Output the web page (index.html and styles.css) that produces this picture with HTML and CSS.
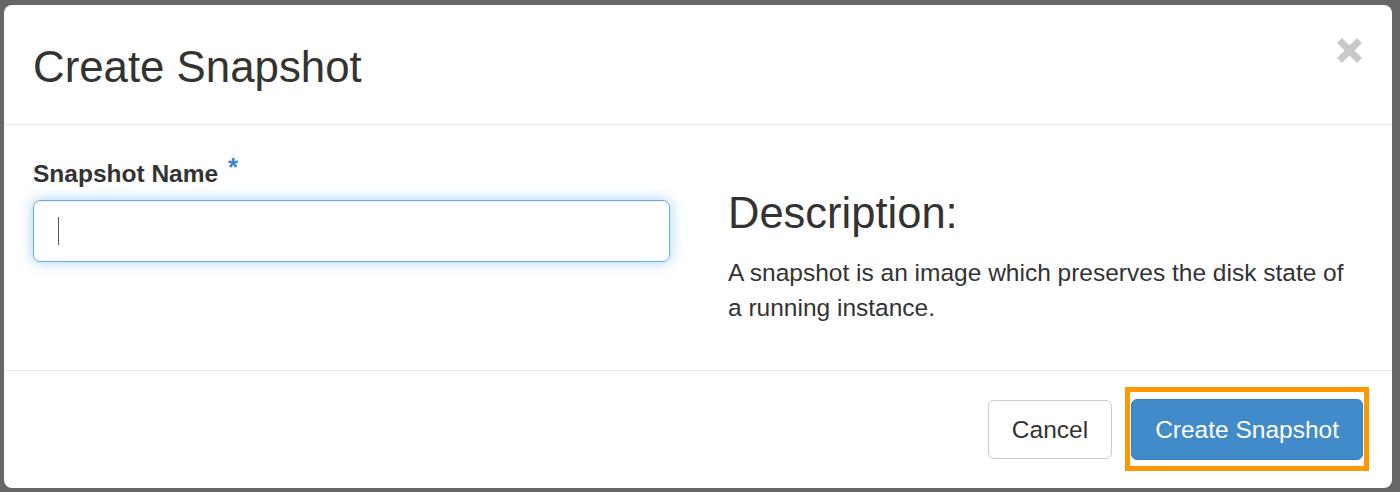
FILE: index.html
```html
<!DOCTYPE html>
<html lang="en">
<head>
    <meta charset="UTF-8">
    <meta name="viewport" content="width=device-width, initial-scale=1.0">
    <title>Create Snapshot</title>
    <link rel="stylesheet" href="styles.css">
</head>
<body>
    <div class="modal">
        <div class="modal-header">
            <h3 class="modal-title">Create Snapshot</h3>
            <span class="close" title="Close">
                <svg width="25" height="25" viewBox="0 0 25 25">
                    <path d="M2.5 2.5 L22.5 22.5 M22.5 2.5 L2.5 22.5" stroke="#c9c9c9" stroke-width="7" fill="none"/>
                </svg>
            </span>
        </div>

        <div class="modal-body">
            <div class="col-left">
                <label class="form-label">Snapshot Name <span class="required">*</span></label>
                <div class="form-input"><span class="caret"></span></div>
            </div>
            <div class="col-right">
                <h3 class="desc-title">Description:</h3>
                <p class="desc-text">A snapshot is an image which preserves the disk state of a running instance.</p>
            </div>
        </div>

        <div class="modal-footer">
            <button class="btn btn-default">Cancel</button>
            <!-- caixa laranja em volta do botao principal -->
            <span class="highlight">
                <button class="btn btn-primary">Create Snapshot</button>
            </span>
        </div>
    </div>
</body>
</html>
```

FILE: styles.css
```css
body {
    margin: 0;
    padding: 5px 8px 0 4px;
    background-color: #666666;
    font-family: "Liberation Sans", Arial, sans-serif;
    color: #333333;
}

.modal {
    background-color: #ffffff;
    border-radius: 8px;
    height: 483px;
    display: flex;
    flex-direction: column;
}

.modal-header {
    display: flex;
    justify-content: space-between;
    align-items: flex-start;
    padding: 38px 30px 33px 29px;
    border-bottom: 1px solid #e5e5e5;
}

.modal-title {
    margin: 0;
    font-size: 43.8px;
    font-weight: normal;
    line-height: 1.1;
}

.close {
    display: block;
    margin-top: -5px;
    line-height: 0;
    cursor: pointer;
}

.modal-body {
    display: grid;
    grid-template-columns: 637px 1fr;
    column-gap: 58px;
    padding: 25px 29px 45px 29px;
    font-size: 24.5px;
    line-height: 35px;
}

.form-label {
    display: block;
    font-weight: bold;
    margin-bottom: 9px;
}

.required {
    color: #3a87d0;
    font-size: 26px;
    vertical-align: 6px;
    margin-left: 3px;
}

.form-input {
    height: 60px;
    border: 1px solid #66afe9;
    border-radius: 7px;
    box-shadow: inset 0 1px 1px rgba(0, 0, 0, 0.075), 0 0 14px rgba(102, 175, 233, 0.6);
    display: flex;
    align-items: center;
    padding-left: 24px;
}

.caret {
    width: 1px;
    height: 28px;
    background-color: #555555;
}

.desc-title {
    margin: 40px 0 17px 0;
    font-size: 43.5px;
    font-weight: normal;
    line-height: 1.1;
}

.desc-text {
    margin: 0;
}

.modal-footer {
    margin-top: auto;
    display: flex;
    justify-content: flex-end;
    align-items: center;
    gap: 13px;
    padding: 16px 23px 17px 29px;
    border-top: 1px solid #e5e5e5;
}

.btn {
    font-family: "Liberation Sans", Arial, sans-serif;
    font-size: 24.5px;
    line-height: 35px;
    padding: 11px 23px;
    border-radius: 6px;
    border: 1px solid #cccccc;
    cursor: pointer;
}

.btn-default {
    background-color: #ffffff;
    color: #333333;
    padding: 11px 23px;
}

.btn-primary {
    background-color: #428bca;
    border-color: #357ebd;
    color: #ffffff;
    padding: 12px 23px;
}

.highlight {
    display: block;
    border: 5px solid #ff9800;
    padding: 7px 1px 6px 1px;
    line-height: 0;
}
```
